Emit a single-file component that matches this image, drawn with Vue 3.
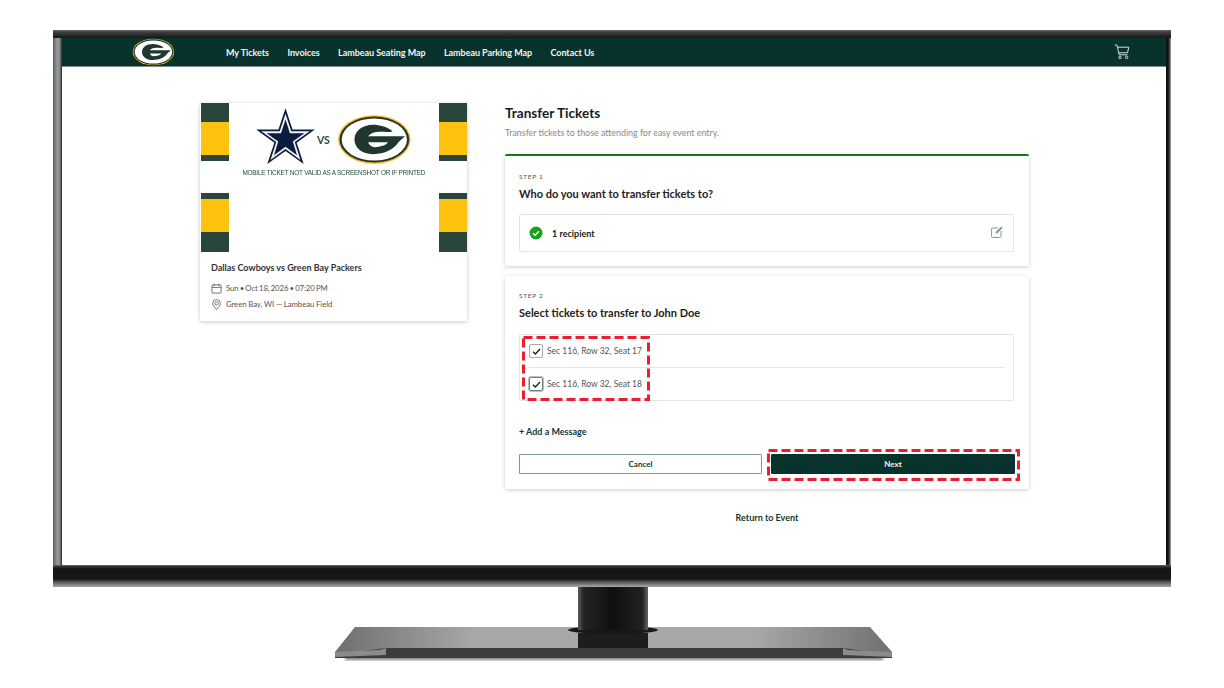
<script setup>
const navItems = ['My Tickets', 'Invoices', 'Lambeau Seating Map', 'Lambeau Parking Map', 'Contact Us']
const seats = ['Sec 116, Row 32, Seat 17', 'Sec 116, Row 32, Seat 18']
</script>

<template>
  <div class="page">
    <svg width="0" height="0" class="defs">
      <symbol id="packers" viewBox="18 14 232 160" preserveAspectRatio="none">
        <ellipse cx="133.500" cy="94" rx="112" ry="76" fill="#ffb81c" />
        <ellipse cx="133.500" cy="94" rx="108" ry="72.500" fill="#203731" />
        <ellipse cx="133.500" cy="94" rx="101" ry="66" fill="#fff" />
        <path d="M190 68C175 55 150 48 130 48C95 48 72 68 72 94C72 120 95 140 130 140C165 140 195 125 208 103L228 84L114 84C122 74 135 70 150 70C165 70 180 72 190 68Z" fill="#203731" />
        <path d="M114 103L176 103C170 113 150 118 135 118C125 118 118 112 114 103Z" fill="#fff" />
      </symbol>
    </svg>

    <div class="tv">
      <div class="tv-top"></div>
      <div class="tv-mid">
        <div class="tv-left"></div>
        <div class="screen">
          <header class="topbar">
            <svg class="nav-logo"><use href="#packers" /></svg>
            <nav class="nav">
              <a v-for="item in navItems" :key="item">{{ item }}</a>
            </nav>
            <svg class="cart" viewBox="0 0 16 16" fill="none" stroke="#d5dcd9" stroke-width="1">
              <path d="M.7 1h2.200l2.300 9.800h8.300" />
              <path d="M3.500 3.200h11.300l-1.300 5.600H4.700" />
              <circle cx="6" cy="13.400" r="1.300" />
              <circle cx="12.600" cy="13.400" r="1.300" />
            </svg>
          </header>

          <main class="content">
            <section class="event-card">
              <div class="ticket-art">
                <div class="stripes">
                  <div class="stripe-set">
                    <i class="g top"></i><i class="y"></i><i class="g thin"></i>
                  </div>
                  <div class="stripe-set">
                    <i class="g thin"></i><i class="y"></i><i class="g bottom"></i>
                  </div>
                </div>
                <div class="art-middle">
                  <div class="art-logos">
                    <svg class="star" viewBox="0 0 210 200">
                      <polygon points="105,13 127,80 197,80 140,121 162,188 105,147 48,188 70,121 13,80 83,80" fill="#0c1c3c" />
                      <polygon points="105,30 123,85 181,85 134,119 152,175 105,141 58,175 76,119 29,85 87,85" fill="#eef0f3" />
                      <polygon points="105,48 119,91 164,91 128,117 141,160 105,134 69,160 82,117 46,91 91,91" fill="#0c1c3c" />
                    </svg>
                    <span class="vs">VS</span>
                    <svg class="art-g"><use href="#packers" /></svg>
                  </div>
                  <p class="art-note">MOBILE TICKET NOT VALID AS A SCREENSHOT OR IF PRINTED</p>
                </div>
                <div class="stripes">
                  <div class="stripe-set">
                    <i class="g top"></i><i class="y"></i><i class="g thin"></i>
                  </div>
                  <div class="stripe-set">
                    <i class="g thin"></i><i class="y"></i><i class="g bottom"></i>
                  </div>
                </div>
              </div>
              <div class="event-body">
                <h3>Dallas Cowboys vs Green Bay Packers</h3>
                <div class="meta">
                  <svg viewBox="0 0 12 12" fill="none" stroke="#444" stroke-width=".8">
                    <rect x="1" y="2" width="10" height="9" rx="1" />
                    <path d="M1 4.800h10M3.500 .8v2.400M8.500 .8v2.400" />
                  </svg>
                  <span class="tight">Sun • Oct 18, 2026 • 07:20 PM</span>
                </div>
                <div class="meta">
                  <svg viewBox="0 0 12 12" fill="none" stroke="#444" stroke-width=".8">
                    <path d="M6 11.400C4 9 1.800 7 1.800 4.800a4.200 4.200 0 0 1 8.400 0C10.200 7 8 9 6 11.400Z" />
                    <circle cx="6" cy="4.800" r="1.800" />
                  </svg>
                  <span>Green Bay, WI — Lambeau Field</span>
                </div>
              </div>
            </section>

            <section class="transfer">
              <h1>Transfer Tickets</h1>
              <p class="lead">Transfer tickets to those attending for easy event entry.</p>

              <div class="step step-one">
                <div class="step-label">STEP 1</div>
                <h2>Who do you want to transfer tickets to?</h2>
                <div class="recipient">
                  <svg class="ok" viewBox="0 0 14 14">
                    <circle cx="7" cy="7" r="6.500" fill="#13a21c" />
                    <path d="M4 7.200l2.100 2L10 5.200" fill="none" stroke="#fff" stroke-width="1.400" />
                  </svg>
                  <strong>1 recipient</strong>
                  <svg class="edit" viewBox="0 0 12 12" fill="none" stroke="#7f9a92" stroke-width="1">
                    <path d="M7 2H1.200a.6 .6 0 0 0-.6 .6v8.200a.6 .6 0 0 0 .6 .6h8.200a.6 .6 0 0 0 .6-.6V5" />
                    <path d="M4.500 7.600l.4-1.900L10.300.6l1.300 1.300-5.200 5.300Z" fill="#7f9a92" stroke="none" />
                  </svg>
                </div>
              </div>

              <div class="step step-two">
                <div class="step-label">STEP 2</div>
                <h2>Select tickets to transfer to John Doe</h2>
                <div class="seat-list">
                  <div v-for="(seat, i) in seats" :key="seat" class="seat">
                    <span class="box" :class="{ focused: i === 1 }">
                      <svg viewBox="0 0 12 12" fill="none" stroke="#0f2a24" stroke-width="1.500">
                        <path d="M2.200 6.200l2.600 2.600 5-5.600" />
                      </svg>
                    </span>
                    <span>{{ seat }}</span>
                  </div>
                  <svg class="callout seats-callout" width="128" height="65">
                    <rect x="1.500" y="1.500" width="125" height="62" />
                  </svg>
                </div>
                <a class="add-message">+ Add a Message</a>
                <div class="actions">
                  <button class="btn cancel">Cancel</button>
                  <div class="next-wrap">
                    <button class="btn next">Next</button>
                    <svg class="callout next-callout" width="253" height="32">
                      <rect x="1.500" y="1.500" width="250" height="29" />
                    </svg>
                  </div>
                </div>
              </div>

              <a class="back">Return to Event</a>
            </section>
          </main>
        </div>
        <div class="tv-right"></div>
      </div>
      <div class="tv-chin"></div>
    </div>

    <svg class="stand" width="1224" height="80" viewBox="0 587 1224 80">
      <defs>
        <linearGradient id="neck" x1="0" x2="1" y1="0" y2="0">
          <stop offset="0" stop-color="#5a5a5a" />
          <stop offset=".08" stop-color="#242424" />
          <stop offset=".5" stop-color="#0f0f0f" />
          <stop offset=".92" stop-color="#222" />
          <stop offset="1" stop-color="#666" />
        </linearGradient>
        <linearGradient id="plate" x1="0" x2="1" y1="0" y2="0">
          <stop offset="0" stop-color="#6f6f6f" />
          <stop offset=".25" stop-color="#a8a8a8" />
          <stop offset=".75" stop-color="#a8a8a8" />
          <stop offset="1" stop-color="#707070" />
        </linearGradient>
        <filter id="soft"><feGaussianBlur stdDeviation="1.800" /></filter>
      </defs>
      <rect x="345" y="656" width="538" height="4" fill="#777" filter="url(#soft)" />
      <polygon points="355,627 870,627 892,652 892,656 335,656 335,652" fill="url(#plate)" />
      <rect x="578" y="633" width="70" height="16" fill="#1d1d1d" />
      <polygon points="386,648 843,648 892,655 892,658 335,658 335,655" fill="#3c3c3c" />
      <polygon points="335,652 380,650 386,648 386,655 335,657" fill="#8b8b8b" />
      <polygon points="892,652 848,650 843,648 843,655 892,657" fill="#8b8b8b" />
      <ellipse cx="613" cy="630" rx="45" ry="4" fill="#181818" />
      <rect x="578" y="587" width="70" height="43" fill="url(#neck)" />
    </svg>
  </div>
</template>

<style>
html, body { margin: 0; background: #fff; overflow: hidden; }
</style>

<style scoped>
.page { width: 1224px; height: 688px; padding-top: 30px; box-sizing: border-box; background: #fff; font-family: Lato, "Noto Sans", sans-serif; color: #222; }
.defs { position: absolute; }
.stand { display: block; }

/* monitor */
.tv { width: 1118px; margin-left: 53px; display: flex; flex-direction: column; }
.tv-top { height: 8px; background: linear-gradient(#6a6a6a 0, #3f3f3f 2px, #2a2a2a 5px, #161616 8px); }
.tv-mid { display: flex; height: 527px; }
.tv-left { width: 9px; background: linear-gradient(90deg, #5d5d5d, #9a9a9a 45%, #8a8a8a 75%, #222); }
.tv-right { width: 5px; background: linear-gradient(90deg, #111 40%, #444 70%, #b5b5b5); }
.tv-chin { height: 22px; background: linear-gradient(#777 0, #3b3b3b 1px, #141414 4px, #161616 14px, #444 16px, #666 18px, #aaa 22px); }
.screen { flex: 1; background: #fff; min-width: 0; display: flex; flex-direction: column; }

/* header */
.topbar { height: 29px; flex: none; background: #08332d; display: flex; align-items: center; padding: 0 36px 0 70px; border-bottom: 1px solid #7f8f8b; box-sizing: border-box; }
.nav-logo { width: 43px; height: 28px; flex: none; }
.nav { display: flex; gap: 18.400px; margin-left: 51px; font-size: 9px; font-weight: 700; letter-spacing: -.05px; color: #f1f4f3; flex: 1; }
.cart { width: 16px; height: 16px; }

/* content */
.content { display: flex; align-items: flex-start; padding: 36px 0 0 138px; gap: 38px; }
.event-card { width: 267px; height: 218px; background: #fff; box-shadow: 0 1px 4px rgba(0,0,0,.22); border-radius: 2px; flex: none; }
.ticket-art { height: 149px; display: flex; margin-left: 1px; }
.stripes { width: 28px; flex: none; display: flex; flex-direction: column; justify-content: space-between; }
.stripe-set { display: flex; flex-direction: column; }
.stripe-set i { display: block; }
.g { background: #2a463a; }
.g.top { height: 19px; }
.g.thin { height: 6px; }
.g.bottom { height: 20px; }
.y { background: #ffc20e; height: 33px; }
.art-middle { flex: 1; display: flex; flex-direction: column; align-items: center; padding-top: 1px; min-width: 0; }
.art-logos { display: flex; align-items: flex-start; align-self: flex-start; margin-left: 23px; }
.star { width: 67px; height: 64px; flex: none; }
.vs { font-size: 10.500px; line-height: 13px; font-weight: 700; color: #2c4a3e; margin: 30px 7px 0 -2px; }
.art-g { width: 75px; height: 51px; margin-top: 10px; flex: none; }
.art-note { margin: 0; font-family: "Liberation Sans", sans-serif; font-size: 7.500px; color: #1f4a3c; white-space: nowrap; letter-spacing: -.25px; transform: scaleX(.856); }
.event-body { padding: 9px 10px 0 11px; }
.event-body h3 { margin: 0 0 6px; font-size: 9px; line-height: 13px; font-weight: 700; color: #333; }
.meta { display: flex; align-items: center; gap: 4px; height: 16px; font-size: 7.800px; letter-spacing: -.1px; color: #555; }
.meta svg { width: 11px; height: 11px; flex: none; }
.tight { word-spacing: -.7px; }

/* right column */
.transfer { width: 524px; display: flex; flex-direction: column; margin-top: -1px; }
h1 { margin: 2px 0 0; font-size: 13.600px; line-height: 18px; font-weight: 700; color: #1b1b1b; }
.lead { margin: 4px 0 0; font-size: 8.900px; line-height: 14px; color: #888; }
.step { background: #fff; box-shadow: 0 1px 4px rgba(0,0,0,.2); border-radius: 2px; padding: 0 14px; box-sizing: border-box; }
.step-one { height: 112px; margin-top: 14px; border-top: 2px solid #117a1a; padding-top: 17px; }
.step-two { height: 213px; margin-top: 10px; padding-top: 16px; }
.step-label { font-size: 6.500px; line-height: 8px; letter-spacing: .7px; color: #555; }
h2 { margin: 5px 0 0; font-size: 11px; line-height: 16px; font-weight: 700; color: #222; }
.recipient { margin-top: 12px; height: 38px; width: 495px; box-sizing: border-box; border: 1px solid #e5e5e5; border-radius: 2px; display: flex; align-items: center; padding: 0 10px 0 9px; font-size: 9px; }
.ok { width: 14px; height: 14px; margin-right: 9px; }
.recipient strong { flex: 1; color: #222; }
.edit { width: 12px; height: 12px; margin-bottom: 2px; }
.seat-list { position: relative; margin-top: 13px; width: 495px; height: 67px; box-sizing: border-box; border: 1px solid #e5e5e5; border-radius: 1px; padding: 0 9px; }
.seat { height: 33px; display: flex; align-items: center; font-size: 8.500px; color: #555; gap: 4px; box-sizing: border-box; }
.seat:first-child { height: 32px; }
.seat + .seat { border-top: 1px solid #e5e5e5; }
.box { width: 14px; height: 14px; box-sizing: border-box; border: 1px solid #a9a9a9; border-radius: 2px; display: flex; align-items: center; justify-content: center; }
.box.focused { border-color: #6f7f7a; box-shadow: 0 0 0 1px #b9c2bf; }
.box svg { width: 11px; height: 11px; }
.callout { position: absolute; pointer-events: none; }
.callout rect { fill: none; stroke: #ed1c2e; stroke-width: 3; stroke-dasharray: 9 4; }
.seats-callout { left: 2px; top: 1px; }
.add-message { display: block; margin-top: 24px; font-size: 9px; line-height: 14px; font-weight: 700; color: #0e3a32; }
.actions { display: flex; gap: 9px; margin-top: 15px; width: 496px; }
.btn { display: block; height: 20px; font-family: inherit; font-size: 8px; font-weight: 700; border-radius: 1px; padding: 0; box-sizing: border-box; }
.cancel { width: 243px; background: #fff; color: #0e3a32; border: 1px solid #7a9a92; }
.next-wrap { position: relative; flex: 1; }
.next { width: 100%; background: #08332d; color: #f2f5f4; border: 1px solid #08332d; }
.next-callout { left: -4px; top: -5px; }
.back { margin-top: 23px; text-align: center; font-size: 9px; line-height: 12px; font-weight: 700; color: #0e3a32; }
</style>
